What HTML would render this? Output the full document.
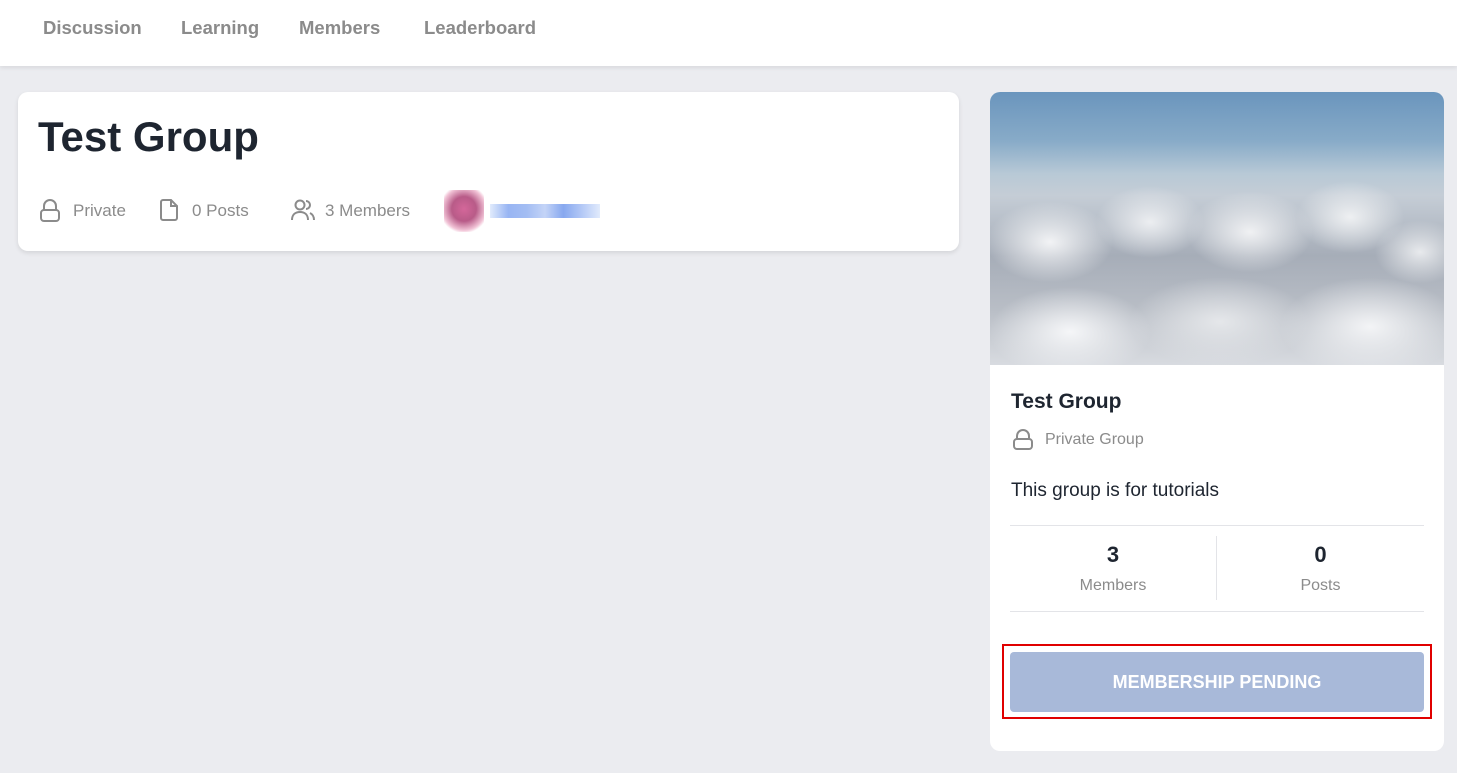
<!DOCTYPE html>
<html><head><meta charset="utf-8"><style>
*{box-sizing:border-box;margin:0;padding:0}
body{width:1457px;height:773px;background:#ebecf0;font-family:"Liberation Sans",sans-serif;position:relative;overflow:hidden}
.nav{position:absolute;left:0;top:0;width:1457px;height:66px;background:#fff;box-shadow:0 2px 4px rgba(0,0,0,.08)}
.nav span{position:absolute;top:17px;font-size:18.5px;color:#8b8b8b;font-weight:bold}
.card{position:absolute;left:18px;top:92px;width:941px;height:159px;background:#fff;border-radius:10px;box-shadow:0 2px 5px rgba(0,0,0,.1)}
h1{position:absolute;left:20px;top:21px;font-size:42px;color:#1e2530;font-weight:bold}
.meta{position:absolute;top:109px;font-size:17px;color:#8b8b8b}
svg{position:absolute}
.side{position:absolute;left:990px;top:92px;width:454px;height:659px;background:#fff;border-radius:10px;overflow:hidden}
.img{position:absolute;left:0;top:0;width:454px;height:273px;background:
radial-gradient(ellipse 70px 45px at 60px 150px,#f2f3f5,transparent 90%),
radial-gradient(ellipse 60px 40px at 160px 130px,#eceef1,transparent 90%),
radial-gradient(ellipse 70px 45px at 260px 140px,#f0f1f3,transparent 90%),
radial-gradient(ellipse 60px 40px at 360px 125px,#eef0f2,transparent 90%),
radial-gradient(ellipse 50px 35px at 430px 160px,#e8eaed,transparent 90%),
radial-gradient(ellipse 90px 50px at 80px 240px,#f5f6f8,transparent 90%),
radial-gradient(ellipse 100px 50px at 230px 230px,#e5e7ea,transparent 90%),
radial-gradient(ellipse 100px 55px at 380px 235px,#f3f4f6,transparent 90%),
linear-gradient(180deg,#6a95bd 0%,#88abc8 18%,#b8c9d6 30%,#c5cdd6 38%,#a6adb8 60%,#b9bec6 80%,#d8dbe0 100%)}
.px{position:absolute}
</style></head><body>
<div class="nav">
<span style="left:43px">Discussion</span><span style="left:181px">Learning</span><span style="left:299px">Members</span><span style="left:424px">Leaderboard</span>
</div>
<div class="card">
<h1>Test Group</h1>
<svg style="left:21px;top:107px" width="22" height="24" viewBox="0 0 22 24" fill="none" stroke="#8b8b8b" stroke-width="2"><path d="M5 11V7a6 6 0 0 1 12 0v4"/><rect x="2" y="11" width="18" height="11" rx="3"/></svg>
<span class="meta" style="left:55px">Private</span>
<svg style="left:141px;top:106px" width="20" height="24" viewBox="0 0 20 24" fill="none" stroke="#8b8b8b" stroke-width="2"><path d="M4 2h8l6 6v12a2 2 0 0 1-2 2H4a2 2 0 0 1-2-2V4a2 2 0 0 1 2-2z"/><path d="M12 2v6h6"/></svg>
<span class="meta" style="left:174px">0 Posts</span>
<svg style="left:272px;top:106px" width="26" height="24" viewBox="0 0 26 24" fill="none" stroke="#8b8b8b" stroke-width="2"><circle cx="10" cy="7" r="4.5"/><path d="M2 22c0-5 3-8 8-8s8 3 8 8"/><path d="M16 3a4 4 0 0 1 0 8M20 15c2 1 4 3 4 7"/></svg>
<span class="meta" style="left:307px">3 Members</span>
<div class="px" style="left:426px;top:98px;width:40px;height:42px;background:radial-gradient(circle at 50% 45%,#d4679a,#b85b88 40%,#f1c3d6 70%,transparent 80%)"></div>
<div class="px" style="left:472px;top:112px;width:110px;height:14px;background:linear-gradient(90deg,#e1ebfc,#98b5f3,#a3bdf3,#c4d4f7,#87a8ef,#b3c8f6,#e1ebfc)"></div>
</div>
<div class="side">
<div class="img"></div>
<div style="position:absolute;left:21px;top:298px;font-size:21px;font-weight:bold;color:#1e2530">Test Group</div>
<svg style="left:22px;top:337px" width="22" height="22" viewBox="0 0 22 22" fill="none" stroke="#8b8b8b" stroke-width="2"><path d="M5 10V7a6 6 0 0 1 12 0v3"/><rect x="2" y="10" width="18" height="10" rx="3"/></svg>
<div style="position:absolute;left:55px;top:339px;font-size:16px;color:#8b8b8b">Private Group</div>
<div style="position:absolute;left:21px;top:388px;font-size:19px;color:#1e2530">This group is for tutorials</div>
<div style="position:absolute;left:20px;top:433px;width:414px;border-top:1px solid #e3e4e8"></div>
<div style="position:absolute;left:226px;top:444px;height:64px;border-left:1px solid #e3e4e8"></div>
<div style="position:absolute;left:20px;top:519px;width:414px;border-top:1px solid #e3e4e8"></div>
<div style="position:absolute;left:20px;width:206px;top:450px;text-align:center;font-size:22px;font-weight:bold;color:#1e2530">3</div>
<div style="position:absolute;left:20px;width:206px;top:485px;text-align:center;font-size:16px;color:#8b8b8b">Members</div>
<div style="position:absolute;left:227px;width:207px;top:450px;text-align:center;font-size:22px;font-weight:bold;color:#1e2530">0</div>
<div style="position:absolute;left:227px;width:207px;top:485px;text-align:center;font-size:16px;color:#8b8b8b">Posts</div>
<div style="position:absolute;left:12px;top:552px;width:430px;height:75px;border:2px solid #e00000"></div>
<div style="position:absolute;left:20px;top:560px;width:414px;height:60px;background:#a8b9d9;border-radius:4px;color:#fff;font-size:18px;font-weight:bold;text-align:center;line-height:60px">MEMBERSHIP PENDING</div>
</div>
</body></html>
